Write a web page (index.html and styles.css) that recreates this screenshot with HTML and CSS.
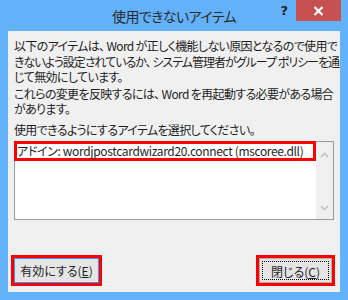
FILE: index.html
```html
<!DOCTYPE html>
<html lang="ja">
<head>
    <meta charset="UTF-8">
    <title>使用できないアイテム</title>
    <link rel="stylesheet" href="styles.css">
</head>
<body>
    <div class="window">
        <div class="titlebar">
            <div></div>
            <div class="title">使用できないアイテム</div>
            <div class="controls">
                <span class="help">?</span>
                <span class="close">
                    <svg width="11" height="10" viewBox="0 0 11 10">
                        <path d="M1.5 1 L9.5 9 M9.5 1 L1.5 9" stroke="#fff" stroke-width="2.2"/>
                    </svg>
                </span>
            </div>
        </div>
        <div class="client">
            <p class="msg">以下のアイテムは、 Word が正しく機能しない原因となるので使用で<br><span class="tight">きないよう設定されているか、 システム管理者がグループ ポリシーを通</span><br>じて無効にしています。</p>
            <p class="msg">これらの変更を反映するには、 Word を再起動する必要がある場合<br>があります。</p>
            <p class="msg last">使用できるようにするアイテムを選択してください。</p>
            <div class="listbox">
                <div class="items">
                    <div class="item">アドイン: wordjpostcardwizard20.connect (mscoree.dll)</div>
                </div>
                <div class="scrollbar">
                    <svg width="9" height="6" viewBox="0 0 9 6"><path d="M1 5 L4.5 1.5 L8 5" fill="none" stroke="#c2c2c2" stroke-width="1.6"/></svg>
                    <svg width="9" height="6" viewBox="0 0 9 6"><path d="M1 1 L4.5 4.5 L8 1" fill="none" stroke="#c2c2c2" stroke-width="1.6"/></svg>
                </div>
            </div>
            <div class="buttons">
                <div class="mark">
                    <button class="btn default">有効にする(<u>E</u>)</button>
                </div>
                <div class="mark">
                    <button class="btn focus"><span class="focus-ring">閉じる(<u>C</u>)</span></button>
                </div>
            </div>
        </div>
    </div>
</body>
</html>
```

FILE: styles.css
```css
body {
    margin: 0;
    padding: 0;
    font-family: "Noto Sans CJK JP", "Noto Sans", sans-serif;
    font-feature-settings: "palt";
}
.window {
    width: 348px;
    height: 300px;
    background-color: #62b1f9;
    display: flex;
    flex-direction: column;
    box-sizing: border-box;
}
.titlebar {
    height: 31px;
    display: grid;
    grid-template-columns: 1fr auto 1fr;
}
.title {
    font-size: 14px;
    letter-spacing: -0.6px;
    color: #2b2b2b;
    line-height: 31px;
    padding-top: 1px;
}
.controls {
    display: flex;
    justify-content: flex-end;
    align-items: flex-start;
    padding-right: 7px;
}
.help {
    font-family: "DejaVu Sans", sans-serif;
    font-weight: bold;
    font-size: 13px;
    color: #222;
    line-height: 20px;
    margin-right: 8px;
    padding-top: 1px;
}
.close {
    width: 45px;
    height: 21px;
    background-color: #c75050;
    display: flex;
    align-items: center;
    justify-content: center;
}
.client {
    flex: 1;
    min-width: 0;
    margin: 0 8px 8px 8px;
    background-color: #f0f0f0;
    display: flex;
    flex-direction: column;
    padding: 7px 5px 6px 6px;
}
.msg {
    margin: 0 0 1px 0;
    font-size: 12px;
    line-height: 15.6px;
    color: #1e1e1e;
    white-space: nowrap;
    letter-spacing: -0.65px;
}
.msg .tight {
    letter-spacing: -1px;
}
.msg.last {
    margin-bottom: 3px;
    margin-top: 4px;
}
.listbox {
    width: 320px;
    height: 79px;
    box-sizing: border-box;
    border: 1px solid #9a9a9a;
    background-color: #fff;
    display: flex;
}
.items {
    flex: 1;
}
.item {
    margin: -1px 0 0 -1px;
    height: 20px;
    box-sizing: border-box;
    border: 3px solid #f00;
    font-size: 12px;
    line-height: 14px;
    color: #1e1e1e;
    white-space: nowrap;
    letter-spacing: -0.35px;
}
.scrollbar {
    width: 17px;
    background-color: #f0f0f0;
    display: flex;
    flex-direction: column;
    justify-content: space-between;
    align-items: center;
    padding: 10px 0 8px 0;
}
.buttons {
    margin-top: auto;
    display: flex;
    justify-content: space-between;
    margin-left: -3px;
}
.mark {
    border: 3px solid #f00;
    display: flex;
}
.btn {
    font-family: "Noto Sans CJK JP", "Noto Sans", sans-serif;
    font-feature-settings: "palt";
    font-size: 12px;
    color: #1e1e1e;
    height: 25px;
    background-color: #e5e5e5;
    border: 1px solid #acacac;
    margin: 0;
    padding: 0;
    line-height: 15px;
}
.btn.default {
    width: 85px;
    border-color: #3399ff;
}
.btn.focus {
    width: 73px;
    padding: 2px;
}
.focus-ring {
    display: block;
    height: 19px;
    line-height: 19px;
    border: 1px dotted #000;
    box-sizing: border-box;
}
```
